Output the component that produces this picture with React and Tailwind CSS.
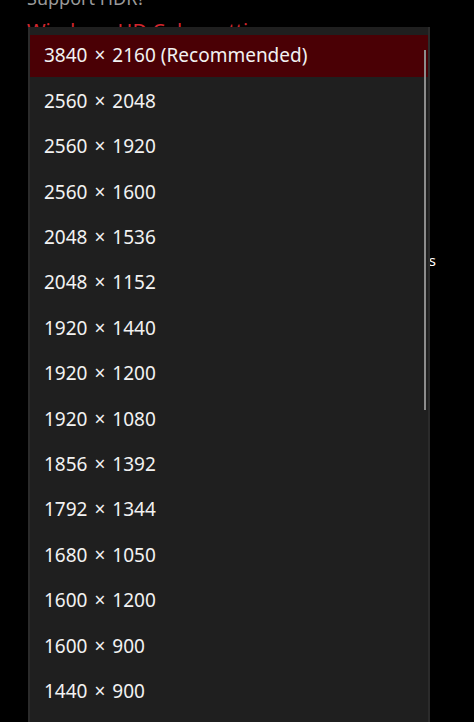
const resolutions = [
  ['3840', '2160', ' (Recommended)'],
  ['2560', '2048'],
  ['2560', '1920'],
  ['2560', '1600'],
  ['2048', '1536'],
  ['2048', '1152'],
  ['1920', '1440'],
  ['1920', '1200'],
  ['1920', '1080'],
  ['1856', '1392'],
  ['1792', '1344'],
  ['1680', '1050'],
  ['1600', '1200'],
  ['1600', '900'],
  ['1440', '900'],
  ['1400', '1050'],
]

const font = { fontFamily: '"Noto Sans", "Open Sans", sans-serif' }

export default function App() {
  return (
    <div className="relative h-[722px] w-[474px] overflow-hidden bg-black" style={font}>
      {/* settings page behind the popup */}
      <div className="pl-[27px]">
        <div className="-mt-[12px] text-[18px] leading-5 text-[#9a9a9a]">Support HDR?</div>
        <div className="mt-[13px] text-[20px] leading-5 text-[#d2262e]">Windows HD Color settings</div>
        <div className="mt-[209px] flex w-[409px] justify-end text-[15px] leading-5 text-white">
          Advanced display settings
        </div>
      </div>

      {/* resolution dropdown */}
      <div className="absolute left-[28px] top-[27px] h-[720px] w-[402px] border-x-2 border-[#2b2b2b] bg-[#1f1f1f] pt-[6px]">
        {resolutions.map(([w, h, note], i) => (
          <div key={w + h} className="flex h-[45.4px] items-center">
            <div
              className={
                i === 0
                  ? 'flex h-[42px] w-full items-center whitespace-pre bg-[#4a0005] pl-[14px] text-[19px] text-[#f2f2f2]'
                  : 'flex h-[42px] w-full items-center whitespace-pre pl-[14px] text-[19px] text-[#f2f2f2]'
              }
            >
              {w}
              <span className="mx-[7px]">×</span>
              {h}
              {note}
            </div>
          </div>
        ))}
        <div className="absolute right-[2px] top-[23px] h-[360px] w-[2px] bg-[#8c8c8c]" />
      </div>
    </div>
  )
}
